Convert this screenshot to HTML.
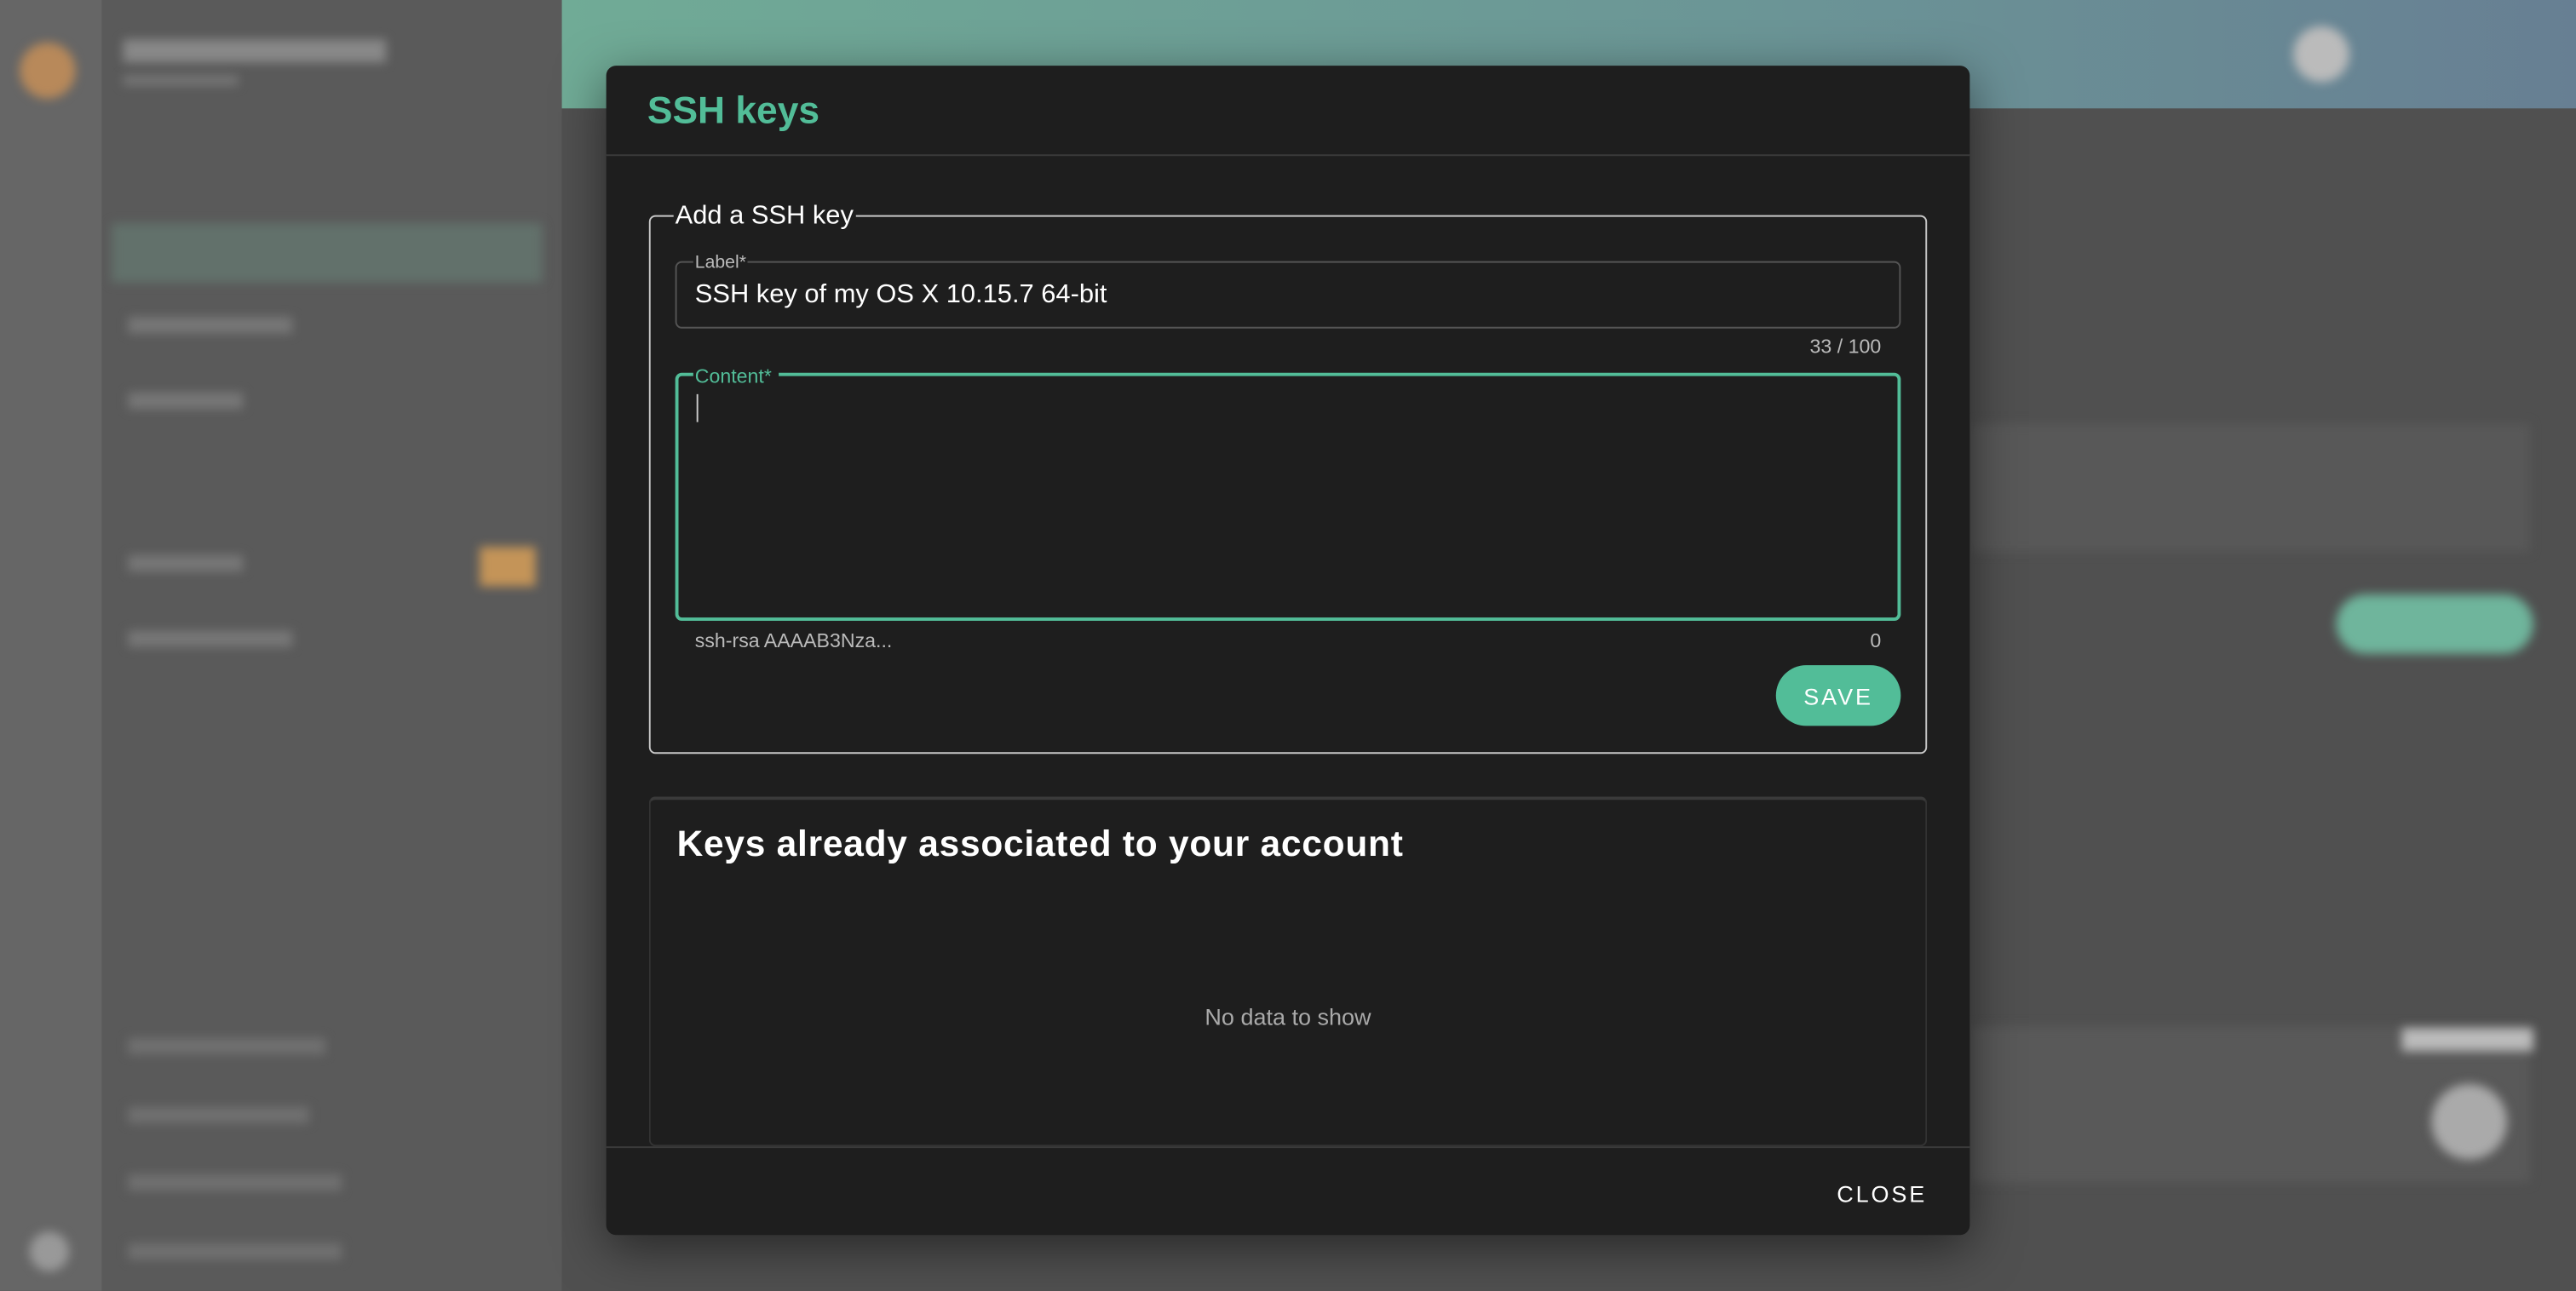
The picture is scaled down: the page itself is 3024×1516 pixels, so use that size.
<!DOCTYPE html>
<html><head><meta charset="utf-8"><style>
html,body{margin:0;padding:0;width:3024px;height:1516px;overflow:hidden;background:#4f4f4f;}
#s{position:absolute;left:0;top:0;width:1568px;height:786px;transform:scale(1.92857);transform-origin:0 0;font-family:"Liberation Sans",sans-serif;}
.a{position:absolute;}
.bl{filter:blur(3px);}
</style></head><body><div id="s">
<div class="a" style="left:0;top:0;width:62px;height:786px;background:#666"></div>
<div class="a" style="left:62px;top:0;width:280px;height:786px;background:#5a5a5a"></div>
<div class="a" style="left:342px;top:0;width:1226px;height:786px;background:#505050"></div>
<div class="a" style="left:342px;top:0;width:1226px;height:66px;background:linear-gradient(90deg,#70ab96,#6b9596 60%,#677f93)"></div>
<div class="a bl" style="left:12px;top:26px;width:34px;height:34px;border-radius:50%;background:#b8895a"></div>
<div class="a bl" style="left:75px;top:24px;width:160px;height:14px;background:#888"></div>
<div class="a bl" style="left:75px;top:46px;width:70px;height:6px;background:#777"></div>
<div class="a bl" style="left:68px;top:136px;width:262px;height:36px;background:#62716b"></div>
<div class="a bl" style="left:78px;top:193px;width:100px;height:10px;background:#777"></div>
<div class="a bl" style="left:78px;top:239px;width:70px;height:10px;background:#777"></div>
<div class="a bl" style="left:78px;top:338px;width:70px;height:10px;background:#777"></div>
<div class="a bl" style="left:292px;top:333px;width:34px;height:24px;background:#c49458"></div>
<div class="a bl" style="left:78px;top:384px;width:100px;height:10px;background:#777"></div>
<div class="a bl" style="left:78px;top:632px;width:120px;height:10px;background:#707070"></div>
<div class="a bl" style="left:78px;top:674px;width:110px;height:10px;background:#707070"></div>
<div class="a bl" style="left:78px;top:715px;width:130px;height:10px;background:#707070"></div>
<div class="a bl" style="left:78px;top:757px;width:130px;height:10px;background:#707070"></div>
<div class="a bl" style="left:18px;top:750px;width:24px;height:24px;border-radius:50%;background:#999"></div>
<div class="a bl" style="left:1396px;top:16px;width:34px;height:34px;border-radius:50%;background:#bbb"></div>
<div class="a bl" style="left:1200px;top:258px;width:340px;height:78px;background:#585858"></div>
<div class="a bl" style="left:1422px;top:362px;width:120px;height:36px;border-radius:18px;background:#6fb59c"></div>
<div class="a bl" style="left:1200px;top:625px;width:340px;height:95px;background:#595959"></div>
<div class="a bl" style="left:1480px;top:660px;width:46px;height:46px;border-radius:50%;background:#aaa"></div>
<div class="a bl" style="left:1462px;top:626px;width:80px;height:14px;background:#bbb"></div>
<div class="a" style="left:369px;top:40px;width:830px;height:712px;background:#1e1e1e;border-radius:6px;box-shadow:0 8px 30px rgba(0,0,0,.5)">
 <div class="a" style="left:25px;top:14px;font-size:23px;font-weight:bold;color:#52bd98;">SSH keys</div>
 <div class="a" style="left:0;top:54px;width:830px;height:1px;background:#3a3a3a"></div>
 <div class="a" style="left:26px;top:91px;width:776px;height:326px;border:1px solid #c8c8c8;border-radius:4px"></div>
 <div class="a" style="left:41px;top:83px;background:#1e1e1e;color:#fff;font-size:16px;padding:0 1px">Add a SSH key</div>
 <div class="a" style="left:42px;top:119px;width:744px;height:39px;border:1px solid #555;border-radius:4px"></div>
 <div class="a" style="left:53px;top:114px;background:#1e1e1e;color:#bbb;font-size:11px;padding:0 1px">Label*</div>
 <div class="a" style="left:54px;top:131px;color:#fff;font-size:16px">SSH key of my OS X 10.15.7 64-bit</div>
 <div class="a" style="right:54px;top:164px;color:#bbb;font-size:12px">33 / 100</div>
 <div class="a" style="left:42px;top:187px;width:742px;height:147px;border:2px solid #52bd98;border-radius:4px"></div>
 <div class="a" style="left:53px;top:182px;background:#1e1e1e;color:#52bd98;font-size:12px;padding:0 4px 0 1px">Content*</div>
 <div class="a" style="left:55px;top:200px;width:1px;height:17px;background:#ccc"></div>
 <div class="a" style="left:54px;top:343px;color:#bbb;font-size:12px">ssh-rsa AAAAB3Nza...</div>
 <div class="a" style="right:54px;top:343px;color:#bbb;font-size:12px">0</div>
 <div class="a" style="left:712px;top:365px;width:76px;height:37px;border-radius:19px;background:#52bd98;color:#fff;font-size:14px;letter-spacing:1.5px;text-align:center;line-height:38px">SAVE</div>
 <div class="a" style="left:26px;top:445px;width:776px;height:210px;border:1px solid #333;border-top:2px solid #3a3a3a;border-radius:4px"></div>
 <div class="a" style="left:43px;top:461px;color:#fff;font-size:22px;font-weight:bold;letter-spacing:0.4px">Keys already associated to your account</div>
 <div class="a" style="left:26px;top:571px;width:778px;text-align:center;color:#aaa;font-size:14px">No data to show</div>
 <div class="a" style="left:0;top:658px;width:830px;height:1px;background:#3a3a3a"></div>
 <div class="a" style="right:26px;top:679px;color:#fff;font-size:14px;letter-spacing:1.5px">CLOSE</div>
</div>
</div></body></html>
